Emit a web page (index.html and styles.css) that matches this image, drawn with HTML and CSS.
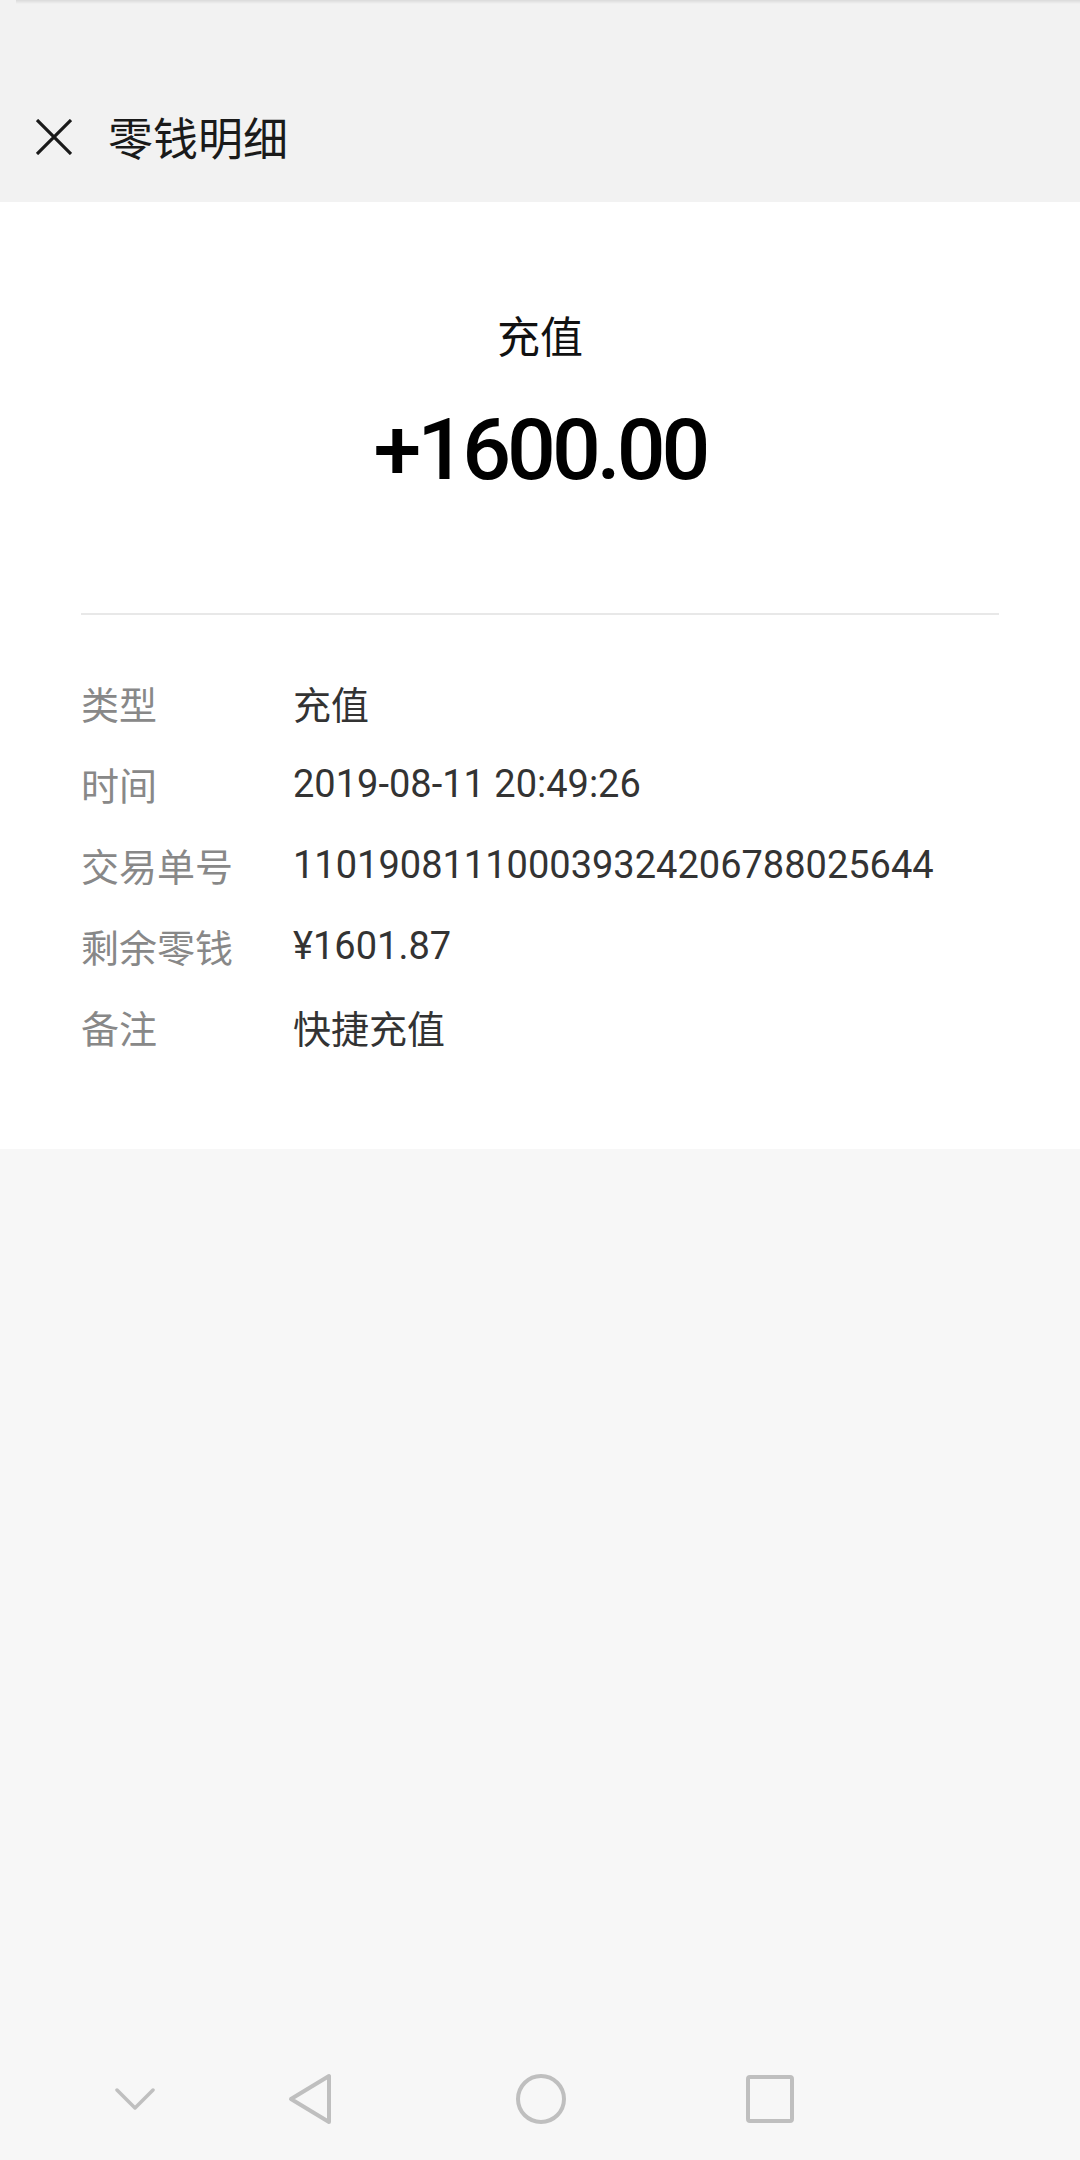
FILE: index.html
```html
<!DOCTYPE html>
<html lang="zh-CN">
  <head>
    <meta charset="UTF-8" />
    <meta name="viewport" content="width=device-width, initial-scale=1.0" />
    <title>零钱明细</title>
    <link rel="stylesheet" href="styles.css">
  </head>
  <body>
    <div class="page">
      <!-- Top bar with close button -->
      <div class="top-bar">
        <div class="shade"></div>
        <div class="title-row">
          <svg class="close-icon" viewBox="0 0 36 36" width="36" height="36">
            <path d="M1 1 L35 35 M35 1 L1 35" stroke="#1a1a1a" stroke-width="3.2" fill="none" />
          </svg>
          <span class="title">零钱明细</span>
        </div>
      </div>

      <!-- Detail card -->
      <div class="card">
        <div class="summary">
          <div class="kind">充值</div>
          <div class="amount">+1600.00</div>
        </div>
        <div class="divider"></div>
        <div class="rows">
          <div class="row"><span class="label">类型</span><span class="value">充值</span></div>
          <div class="row"><span class="label">时间</span><span class="value">2019-08-11 20:49:26</span></div>
          <div class="row"><span class="label">交易单号</span><span class="value">110190811100039324206788025644</span></div>
          <div class="row"><span class="label">剩余零钱</span><span class="value">¥1601.87</span></div>
          <div class="row"><span class="label">备注</span><span class="value">快捷充值</span></div>
        </div>
      </div>

      <div class="filler"></div>

      <!-- Android navigation bar -->
      <div class="nav-bar">
        <svg class="nav-icon" viewBox="0 0 40 24" width="40" height="24">
          <path d="M2 3 L20 21 L38 3" stroke="#bfbfbf" stroke-width="3.5" fill="none" stroke-linecap="round" stroke-linejoin="round" />
        </svg>
        <svg class="nav-icon" viewBox="0 0 46 52" width="46" height="52">
          <path d="M42 3 L42 49 L4 26 Z" stroke="#bfbfbf" stroke-width="4" fill="none" stroke-linejoin="round" />
        </svg>
        <svg class="nav-icon" viewBox="0 0 52 52" width="52" height="52">
          <circle cx="26" cy="26" r="23" stroke="#bfbfbf" stroke-width="4" fill="none" />
        </svg>
        <svg class="nav-icon" viewBox="0 0 48 48" width="48" height="48">
          <rect x="2" y="2" width="44" height="44" rx="2" stroke="#bfbfbf" stroke-width="4" fill="none" />
        </svg>
      </div>
    </div>
  </body>
</html>
```

FILE: styles.css
```css
body {
  margin: 0;
  font-family: Roboto, "Noto Sans CJK SC", sans-serif;
  background-color: #f7f7f7;
  color: #333;
}
.page {
  width: 1080px;
  height: 2160px;
  display: flex;
  flex-direction: column;
}

/* top bar */
.top-bar {
  height: 202px;
  background-color: #f2f2f2;
  display: flex;
  flex-direction: column;
}
.shade {
  height: 4px;
  margin-left: 16px;
  background: linear-gradient(#dadada, rgba(242, 242, 242, 0));
}
.title-row {
  display: flex;
  align-items: center;
  padding: 110px 0 0 36px;
}
.close-icon {
  display: block;
}
.title {
  margin-left: 36px;
  font-size: 45px;
  color: #1a1a1a;
  line-height: 1;
  font-family: "Noto Sans CJK SC", sans-serif;
}

/* card */
.card {
  background-color: #fff;
  height: 947px;
  padding: 0 81px;
}
.summary {
  display: flex;
  flex-direction: column;
  align-items: center;
  padding-top: 107px;
  height: 298px;
  box-sizing: border-box;
}
.kind {
  font-family: "Noto Sans CJK SC", sans-serif;
  font-size: 43px;
  color: #111;
  line-height: 50px;
}
.amount {
  margin-top: 41px;
  font-family: Roboto, sans-serif;
  font-weight: 500;
  font-size: 86px;
  letter-spacing: -4px;
  line-height: 100px;
  color: #000;
}
.divider {
  margin-top: 113px;
  height: 2px;
  background-color: #e8e8e8;
}
.rows {
  padding-top: 47px;
  display: flex;
  flex-direction: column;
}
.row {
  display: flex;
  align-items: center;
  height: 81px;
  font-size: 38px;
}
.label {
  width: 212px;
  color: #888;
  font-family: "Noto Sans CJK SC", sans-serif;
}
.value {
  color: #333;
}

.filler {
  flex: 1;
}

/* nav bar */
.nav-bar {
  height: 130px;
  display: flex;
  align-items: center;
  padding-top: 8px;
  box-sizing: border-box;
}
.nav-icon {
  display: block;
}
.nav-icon:nth-child(1) {
  margin-left: 115px;
}
.nav-icon:nth-child(2) {
  margin-left: 132px;
}
.nav-icon:nth-child(3) {
  margin-left: 182px;
}
.nav-icon:nth-child(4) {
  margin-left: 179px;
}
```
